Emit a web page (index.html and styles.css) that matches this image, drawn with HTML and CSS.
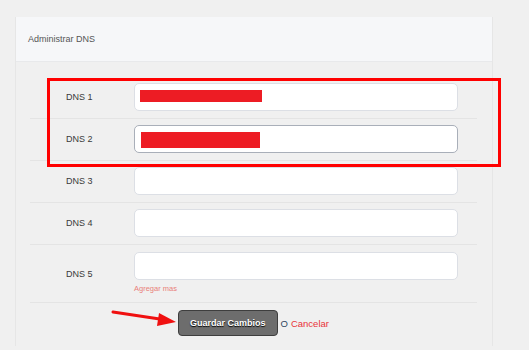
FILE: index.html
```html
<!DOCTYPE html>
<html lang="es">
  <head>
    <meta charset="UTF-8" />
    <title>Administrar DNS</title>
    <link rel="stylesheet" href="styles.css">
  </head>
  <body>
    <div class="page">
      <div class="panel">
        <div class="panel-heading">Administrar DNS</div>
        <form class="panel-body">
          <div class="row">
            <label class="row-label" for="dns1">DNS 1</label>
            <div class="field">
              <input type="text" id="dns1" class="input" />
              <span class="redact redact-1"></span>
            </div>
          </div>
          <div class="row">
            <label class="row-label" for="dns2">DNS 2</label>
            <div class="field">
              <input type="text" id="dns2" class="input input-focus" />
              <span class="redact redact-2"></span>
            </div>
          </div>
          <div class="row">
            <label class="row-label" for="dns3">DNS 3</label>
            <div class="field"><input type="text" id="dns3" class="input" /></div>
          </div>
          <div class="row">
            <label class="row-label" for="dns4">DNS 4</label>
            <div class="field"><input type="text" id="dns4" class="input" /></div>
          </div>
          <div class="row row-last">
            <label class="row-label" for="dns5">DNS 5</label>
            <div class="field">
              <input type="text" id="dns5" class="input" />
              <a class="add-more" href="#">Agregar mas</a>
            </div>
          </div>
          <div class="actions">
            <button type="button" class="btn-save">Guardar Cambios</button>
            <span class="or">O</span>
            <a class="cancel" href="#">Cancelar</a>
          </div>
        </form>
      </div>
    </div>

    <div class="highlight-box"></div>
    <svg class="arrow" width="80" height="30" viewBox="0 0 80 30">
      <line x1="2" y1="3" x2="52" y2="10.5" stroke="#f01010" stroke-width="3" stroke-linecap="round" />
      <polygon points="48,4 46,17 65,13" fill="#f01010" />
    </svg>
  </body>
</html>
```

FILE: styles.css
```css
* {
  box-sizing: border-box;
}
body {
  margin: 0;
  background-color: #f0f0f0;
  font-family: "Liberation Sans", Arial, sans-serif;
  font-size: 9px;
  color: #3a3a3a;
  position: relative;
  height: 350px;
  overflow: hidden;
}

.page {
  padding: 17px 36px 0 15px;
}

.panel {
  border: 1px solid #e6e6e6;
  border-bottom: none;
}

.panel-heading {
  height: 45px;
  padding-left: 12px;
  display: flex;
  align-items: center;
  background-color: #f6f7f9;
  border-bottom: 1px solid #e8e9eb;
  color: #555;
  margin-top: -1px;
}

.panel-body {
  padding: 14px 15px 0 14px;
  margin: 0;
}

.row {
  display: flex;
  align-items: center;
  padding: 7px 0 7px;
  border-bottom: 1px solid #e4e4e4;
}
.row + .row {
  padding-top: 6px;
}

.row-last {
  padding-top: 7px !important;
  padding-bottom: 7px;
}

.row-label {
  width: 104px;
  padding-left: 36px;
}

.field {
  position: relative;
  width: 324px;
}

.input {
  display: block;
  width: 324px;
  height: 28px;
  background: #fff;
  border: 1px solid #dcdfe5;
  border-radius: 5px;
  outline: none;
}

.input-focus {
  border-color: #a9afb9;
}

.redact {
  position: absolute;
  background-color: #ed1c24;
}
.redact-1 {
  left: 6px;
  top: 7px;
  width: 122px;
  height: 12px;
}
.redact-2 {
  left: 7px;
  top: 7px;
  width: 119px;
  height: 16px;
}

.add-more {
  display: block;
  margin-top: 3px;
  font-size: 7.5px;
  line-height: 12px;
  color: #e9807a;
  text-decoration: none;
}

.actions {
  display: flex;
  align-items: center;
  justify-content: center;
  padding: 7px 0 10px;
}

.btn-save {
  height: 26px;
  padding: 0 11px;
  background-color: #6d6d6d;
  border: 1px solid #3e3e3e;
  border-radius: 4px;
  color: #fff;
  font-family: "Liberation Sans", Arial, sans-serif;
  font-size: 9px;
  font-weight: bold;
  text-shadow: 0 1px 1px #000;
  cursor: pointer;
}

.or {
  margin-left: 3px;
  font-size: 9.5px;
  color: #2f4660;
}

.cancel {
  margin-left: 3px;
  font-size: 9.5px;
  color: #e8333a;
  text-decoration: none;
}

.highlight-box {
  position: absolute;
  left: 47px;
  top: 78px;
  width: 454px;
  height: 89px;
  border: 3px solid #ff0000;
}

.arrow {
  position: absolute;
  left: 111px;
  top: 309px;
}
```
